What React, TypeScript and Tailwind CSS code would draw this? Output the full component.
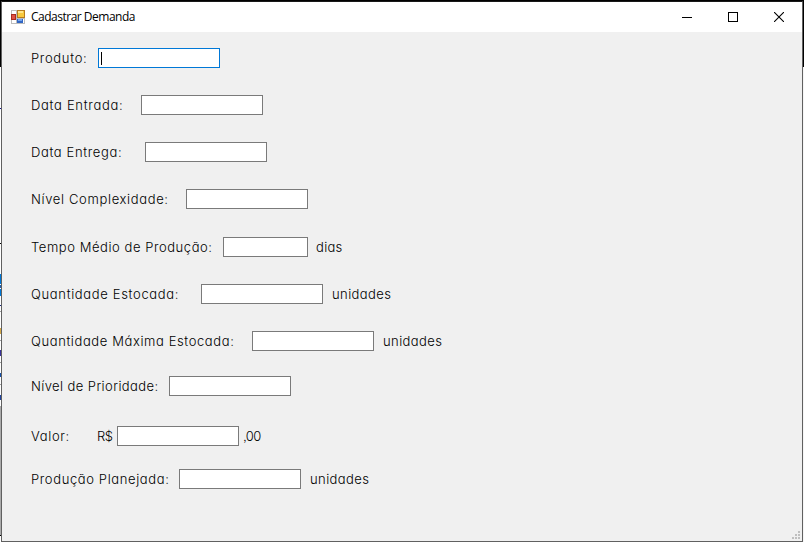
type Field = {
  id: string;
  label: string;
  row: string;
  labelClass: string;
  inputClass: string;
  prefix?: string;
  suffix?: string;
  suffixClass?: string;
  focused?: boolean;
};

const fields: Field[] = [
  { id: 'produto', label: 'Produto:', row: 'mt-4', labelClass: 'w-[67px] tracking-[0.68px]', inputClass: 'w-[122px]', focused: true },
  { id: 'entrada', label: 'Data Entrada:', row: 'mt-[27px]', labelClass: 'w-[110px] tracking-[0.7px]', inputClass: 'w-[122px]' },
  { id: 'entrega', label: 'Data Entrega:', row: 'mt-[27px]', labelClass: 'w-[114px] tracking-[0.63px]', inputClass: 'w-[122px]' },
  { id: 'complexidade', label: 'Nível Complexidade:', row: 'mt-[27px]', labelClass: 'w-[155px] tracking-[0.65px]', inputClass: 'w-[122px]' },
  { id: 'tempo', label: 'Tempo Médio de Produção:', row: 'mt-7', labelClass: 'w-[192px] tracking-[0.56px]', inputClass: 'w-[85px]', suffix: 'dias', suffixClass: 'ml-2 tracking-[0.3px]' },
  { id: 'estocada', label: 'Quantidade Estocada:', row: 'mt-[27px]', labelClass: 'w-[170px] tracking-[0.66px]', inputClass: 'w-[122px]', suffix: 'unidades', suffixClass: 'ml-[9px] tracking-[0.42px]' },
  { id: 'maxima', label: 'Quantidade Máxima Estocada:', row: 'mt-[27px]', labelClass: 'w-[221px] tracking-[0.6px]', inputClass: 'w-[122px]', suffix: 'unidades', suffixClass: 'ml-[9px] tracking-[0.42px]' },
  { id: 'prioridade', label: 'Nível de Prioridade:', row: 'mt-[25px]', labelClass: 'w-[138px] tracking-[0.41px]', inputClass: 'w-[122px]' },
  { id: 'valor', label: 'Valor:', row: 'mt-[30px]', labelClass: 'w-[66px] tracking-[0.65px]', inputClass: 'w-[122px]', prefix: 'R$', suffix: ',00', suffixClass: 'ml-1 tracking-[-0.6px]' },
  { id: 'planejada', label: 'Produção Planejada:', row: 'mt-[23px]', labelClass: 'w-[148px] tracking-[0.62px]', inputClass: 'w-[122px]', suffix: 'unidades', suffixClass: 'ml-[9px] tracking-[0.42px]' },
];

function FormIcon() {
  return (
    <svg className="ml-[9px] h-[14px] w-[14px] shrink-0" viewBox="0 0 14 14" shapeRendering="crispEdges">
      <rect width="14" height="14" fill="#bdbdbd" />
      <path d="M1 1h4v3H1zM1 10h4v3H1zM6 9h7v4H6z" fill="#fff" />
      <rect y="4" width="5" height="6" fill="#a92b20" />
      <rect x="1" y="5" width="3" height="4" fill="#df5144" />
      <rect x="6" y="0" width="8" height="8" fill="#b77b1d" />
      <rect x="7" y="1" width="6" height="6" fill="#f8c93d" />
      <rect x="7" y="1" width="5" height="2" fill="#ffe58b" />
      <rect x="6" y="9" width="6" height="4" fill="#3166c4" />
      <rect x="7" y="9" width="4" height="2" fill="#75a5ee" />
    </svg>
  );
}

function TitleBar() {
  return (
    <header className="flex h-[30px] items-center bg-white">
      <FormIcon />
      <h1 className="ml-1.5 flex-1 whitespace-nowrap font-['Open_Sans','Noto_Sans',sans-serif] text-[12px] leading-4 tracking-[-0.5px]">
        Cadastrar Demanda
      </h1>
      <button className="flex h-[30px] w-[46px] items-center justify-center" aria-label="Minimizar">
        <span className="h-px w-[10px] bg-black" />
      </button>
      <button className="flex h-[30px] w-[46px] items-center justify-center" aria-label="Maximizar">
        <span className="h-[10px] w-[10px] border border-black" />
      </button>
      <button className="flex h-[30px] w-[46px] items-center justify-center" aria-label="Fechar">
        <svg className="h-[10px] w-[10px]" viewBox="0 0 10 10" stroke="#000" strokeWidth="1.1">
          <path d="M0 0l10 10M10 0L0 10" />
        </svg>
      </button>
    </header>
  );
}

function FieldRow({ field }: { field: Field }) {
  return (
    <div className={`flex h-5 items-center whitespace-nowrap ${field.row}`}>
      <label htmlFor={field.id} className={`shrink-0 ${field.labelClass}`}>{field.label}</label>
      {field.prefix && <span className="w-5 shrink-0 tracking-[-0.5px]">{field.prefix}</span>}
      <div
        id={field.id}
        role="textbox"
        className={`flex h-5 shrink-0 items-center border bg-white ${field.focused ? 'border-[#0078d7]' : 'border-[#7a7a7a]'} ${field.inputClass}`}
      >
        {field.focused && <span className="ml-0.5 h-[13px] w-px bg-black" />}
      </div>
      {field.suffix && <span className={field.suffixClass}>{field.suffix}</span>}
    </div>
  );
}

function ResizeGrip() {
  return (
    <svg className="h-2 w-2" viewBox="0 0 8 8" fill="#bfbfbf" shapeRendering="crispEdges">
      <path d="M6 0h2v2H6zM3 3h2v2H3zM6 3h2v2H6zM0 6h2v2H0zM3 6h2v2H3zM6 6h2v2H6z" />
    </svg>
  );
}

const strip = [
  'h-[67px] bg-black', 'h-[41px] bg-white', 'h-px bg-[#16168c]', 'h-[134px] bg-white', 'h-px bg-black',
  'h-[30px] bg-white', 'h-[10px] bg-[#0078d7]', 'h-px bg-white', 'h-[3px] bg-[#245fab]', 'h-px bg-white',
  'h-[7px] bg-[#0078d7]', 'h-[9px] bg-white', 'h-px bg-[#1a287f]', 'h-[5px] bg-white', 'h-px bg-[#a0a0a0]',
  'h-4 bg-white', 'h-[6px] bg-[#d3a849]', 'h-[6px] bg-white', 'h-px bg-[#a0a0a0]', 'h-[9px] bg-white',
  'h-[6px] bg-[#3b329a]', 'h-[6px] bg-white', 'h-px bg-[#a0a0a0]', 'h-[10px] bg-white', 'h-1 bg-[#1650a8]',
  'h-[7px] bg-white', 'h-px bg-[#a0a0a0]', 'h-[10px] bg-white', 'h-[5px] bg-[#21449c]', 'h-[6px] bg-white',
  'h-[129px] bg-[#ababab]', 'h-px bg-black', 'flex-1 bg-white',
];

export default function App() {
  return (
    <div className="flex h-[542px] w-[804px] overflow-hidden bg-black text-black">
      <div className="flex w-px flex-col">
        {strip.map((segment, index) => <div key={index} className={`w-px shrink-0 ${segment}`} />)}
      </div>
      <main className="mt-px flex h-[541px] w-[802px] flex-col border border-[#606060] border-t-[#191919] bg-[#f0f0f0]">
        <TitleBar />
        <form className="flex-1 pl-[29px] font-['Inter','Liberation_Sans',sans-serif] text-[13px] font-[350] leading-5 [font-feature-settings:'cv11'_1,'ss03'_1]">
          {fields.map((field) => <FieldRow key={field.id} field={field} />)}
        </form>
        <div className="flex justify-end pb-0.5 pr-0.5"><ResizeGrip /></div>
      </main>
      <div className="w-px">
        <div className="h-[67px] bg-black" />
        <div className="h-[475px] bg-[#f5f5f5]" />
      </div>
    </div>
  );
}
